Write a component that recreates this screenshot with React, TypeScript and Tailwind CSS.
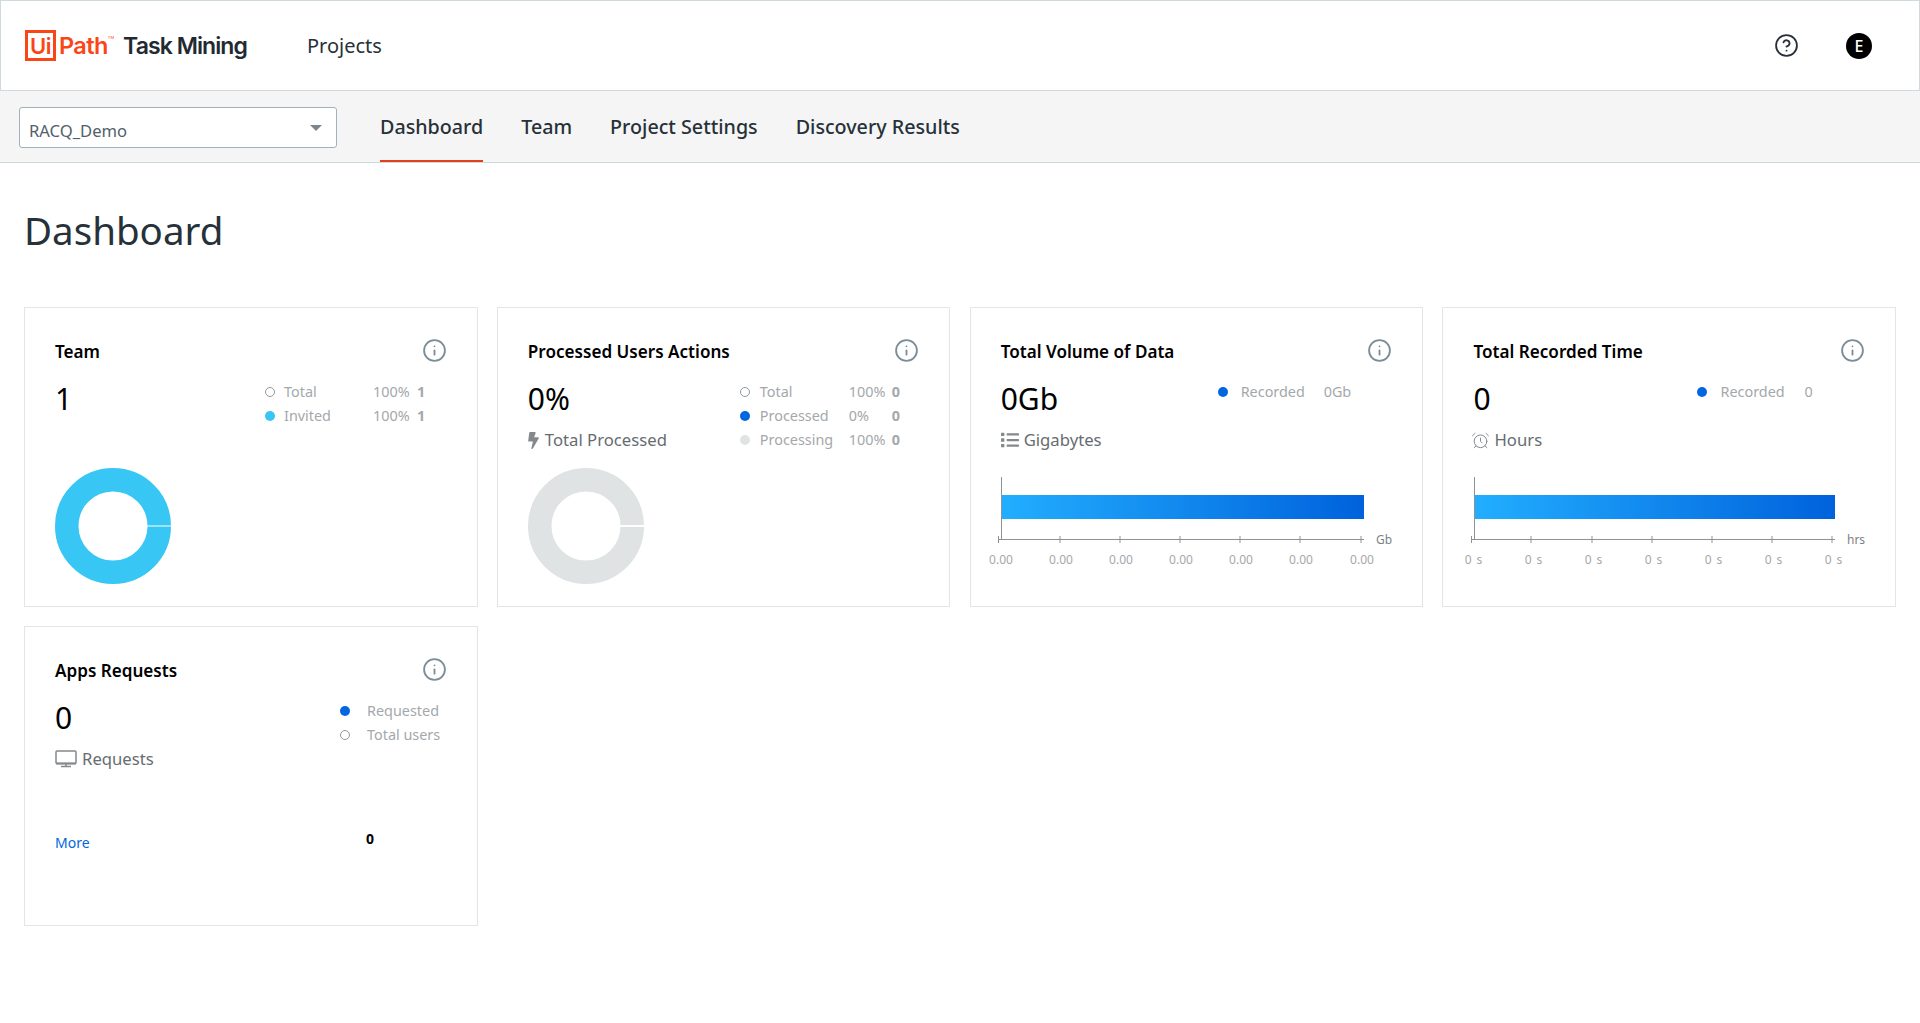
import { AlarmClock, CircleHelp, Info } from "lucide-react";
import { FaBolt, FaList } from "react-icons/fa";
import type { ReactNode } from "react";

type LegendRow = { dot: "hollow" | "blue" | "cyan" | "gray"; label: string; pct?: string; val?: string };

const dotClass = {
    hollow: "border border-[#8f9aa1] bg-white",
    blue: "bg-[#0067df]",
    cyan: "bg-[#38c6f4]",
    gray: "bg-[#dfe3e4]",
};

function Legend({ rows, className }: { rows: LegendRow[]; className: string }) {
    return (
        <div className={`grid items-center text-[14.4px] leading-6 text-[#a4a8ab] ${className}`}>
            {rows.map((r) => (
                <div key={r.label} className="contents">
                    <span className={`size-2.5 rounded-full ${dotClass[r.dot]}`} />
                    <span>{r.label}</span>
                    {r.pct !== undefined && <span>{r.pct}</span>}
                    {r.val !== undefined && <span className={r.pct !== undefined ? "font-bold" : ""}>{r.val}</span>}
                </div>
            ))}
        </div>
    );
}

function Card({
    title,
    value,
    sub,
    left,
    legend,
    children,
}: {
    title: string;
    value: string;
    sub?: ReactNode;
    left: string;
    legend: ReactNode;
    children?: ReactNode;
}) {
    return (
        <div className="h-[300px] border border-[#e3e5e6] bg-white pt-8 pl-[30px] pr-[30px]">
            <div className="flex items-center justify-between">
                <h3 className="text-[17.1px] leading-6 font-semibold text-black">{title}</h3>
                <Info size={25} strokeWidth={1.75} className="-my-px -mt-1 text-[#7b8d99]" />
            </div>
            <div className={`mt-[15px] grid ${left}`}>
                <div>
                    <div className="text-[30px] leading-10 text-black">{value}</div>
                    <div className="mt-[9px] flex h-6 items-center text-[16.7px] leading-6 text-[#676c70]">{sub}</div>
                </div>
                <div className="mt-px">{legend}</div>
            </div>
            {children}
        </div>
    );
}

function Donut({ color }: { color: string }) {
    return (
        <svg width="116" height="116" viewBox="0 0 116 116" className="mt-4 block">
            <circle cx="58" cy="58" r="46.25" fill="none" stroke={color} strokeWidth="23.5" />
            <rect x="92" y={color === "#dfe3e4" ? 57 : 57.5} width="24" height={color === "#dfe3e4" ? 2 : 1} fill="#fff" />
        </svg>
    );
}

function BarChart({ id, ticks, centers, label, unit, unitX, barEnd, className }: {
    id: string;
    ticks: number[];
    centers: number[];
    label: string;
    unit: string;
    unitX: number;
    barEnd: number;
    className?: string;
}) {
    const end = ticks[ticks.length - 1];
    return (
        <svg width="400" height="95" className={`mt-[25px] block overflow-visible ${className ?? ""}`}>
            <defs>
                <linearGradient id={id}>
                    <stop offset="0" stopColor="#22aeff" />
                    <stop offset="1" stopColor="#0062dc" />
                </linearGradient>
            </defs>
            <rect x="1" y="18" width={barEnd} height="24" fill={`url(#${id})`} />
            <path d={`M.5 0V62.5M${ticks[0]} 62.5H${end + 3}`} stroke="#8d9296" fill="none" />
            {ticks.map((t) => (
                <path key={t} d={`M${t} 59V66`} stroke="#8d9296" />
            ))}
            {centers.map((c) => (
                <text key={c} x={c} y="87" textAnchor="middle" fontSize="12" fill="#a4a8ab" letterSpacing={label === "0 s" ? 1 : 0}>
                    {label}
                </text>
            ))}
            <text x={unitX} y="67" fontSize="12" fill="#7c8286">{unit}</text>
        </svg>
    );
}

function MonitorIcon() {
    return (
        <svg width="22" height="18" viewBox="0 0 22 18" fill="none" stroke="#85898c" className="mr-[5px] shrink-0">
            <rect x="1" y="1" width="20" height="12.5" rx="1" strokeWidth="1.5" />
            <path d="M1 13.5H21" strokeWidth="2" />
            <path d="M11 14V16M6 16.5H16" strokeWidth="1.5" />
        </svg>
    );
}

export default function App() {
    return (
        <div className="min-h-[1023px] bg-white font-['Noto_Sans',sans-serif] text-[#273139]">
            <header className="flex h-[91px] items-center border border-[#cfd8dd] pl-6 pr-[47px]">
                <div className="flex w-[222px] items-center font-['Inter',sans-serif]">
                    <span className="flex h-[31px] w-[31px] items-center justify-center border-[3px] border-[#fa4616] text-[22px] leading-none font-semibold tracking-tight text-[#fa4616]">
                        Ui
                    </span>
                    <span className="ml-[3px] text-[23.5px] leading-none font-semibold tracking-tight text-[#fa4616]">Path</span>
                    <span className="mb-4 text-[4px] leading-none text-[#fa4616]">TM</span>
                    <span className="mt-0.5 ml-auto text-[23px] leading-none font-semibold tracking-[-0.04em] whitespace-nowrap text-[#1f2a33]">
                        Task Mining
                    </span>
                </div>
                <nav className="ml-[60px] text-[20px]">Projects</nav>
                <div className="ml-auto flex items-center gap-[47px]">
                    <CircleHelp size={25} strokeWidth={1.75} className="text-[#273139]" />
                    <span className="flex size-[26px] items-center justify-center rounded-full bg-black text-base font-medium text-white">
                        E
                    </span>
                </div>
            </header>

            <div className="flex h-[72px] border-b border-[#cfd8dd] bg-[#f5f5f5] pl-[19px]">
                <div className="mt-4 flex h-[41px] w-[318px] items-center justify-between rounded-[3px] border border-[#a4b1b8] bg-white pr-[14px] pl-[9px]">
                    <span className="mt-2 text-[16.6px] text-[#526069]">RACQ_Demo</span>
                    <span className="h-0 w-0 border-x-[6px] border-t-[6px] border-x-transparent border-t-[#7d868c]" />
                </div>
                <nav className="ml-[43px] flex gap-[38px] text-[19.7px] font-medium">
                    <a className="flex h-[71px] items-center border-b-2 border-[#e2401b] pt-0.5">Dashboard</a>
                    <a className="flex h-[71px] items-center">Team</a>
                    <a className="flex h-[71px] items-center">Project Settings</a>
                    <a className="flex h-[71px] items-center">Discovery Results</a>
                </nav>
            </div>

            <main className="px-6">
                <h1 className="mt-[42px] text-[38.5px] leading-[50px]">Dashboard</h1>
                <div className="mt-[52px] grid grid-cols-4 gap-x-[19.33px] gap-y-[19px]">
                    <Card
                        title="Team"
                        value="1"
                        left="grid-cols-[210px_1fr]"
                        legend={
                            <Legend
                                className="grid-cols-[19px_89px_44px_auto]"
                                rows={[
                                    { dot: "hollow", label: "Total", pct: "100%", val: "1" },
                                    { dot: "cyan", label: "Invited", pct: "100%", val: "1" },
                                ]}
                            />
                        }
                    >
                        <Donut color="#38c6f4" />
                    </Card>
                    <Card
                        title="Processed Users Actions"
                        value="0%"
                        sub={<><FaBolt size={17} className="mr-[3px] -ml-[3px] shrink-0 text-[#85898c]" />Total Processed</>}
                        left="grid-cols-[212px_1fr]"
                        legend={
                            <Legend
                                className="grid-cols-[20px_89px_43px_auto]"
                                rows={[
                                    { dot: "hollow", label: "Total", pct: "100%", val: "0" },
                                    { dot: "blue", label: "Processed", pct: "0%", val: "0" },
                                    { dot: "gray", label: "Processing", pct: "100%", val: "0" },
                                ]}
                            />
                        }
                    >
                        <Donut color="#dfe3e4" />
                    </Card>
                    <Card
                        title="Total Volume of Data"
                        value="0Gb"
                        sub={<><FaList size={18} className="mr-[5px] shrink-0 text-[#85898c]" />Gigabytes</>}
                        left="grid-cols-[217px_1fr]"
                        legend={
                            <Legend
                                className="grid-cols-[23px_83px_auto]"
                                rows={[{ dot: "blue", label: "Recorded", val: "0Gb" }]}
                            />
                        }
                    >
                        <BarChart
                            id="gb"
                            ticks={[-2.5, 59, 119, 179, 239, 299, 360]}
                            centers={[0, 60, 120, 180, 240, 300, 361]}
                            label="0.00"
                            unit="Gb"
                            unitX={375}
                            barEnd={362}
                        />
                    </Card>
                    <Card
                        title="Total Recorded Time"
                        value="0"
                        sub={<><AlarmClock size={19} strokeWidth={1.25} className="mr-1 -ml-0.5 shrink-0 text-[#85898c]" />Hours</>}
                        left="grid-cols-[224px_1fr]"
                        legend={
                            <Legend
                                className="grid-cols-[23px_84px_auto]"
                                rows={[{ dot: "blue", label: "Recorded", val: "0" }]}
                            />
                        }
                    >
                        <BarChart
                            id="hrs"
                            className="ml-px"
                            ticks={[-2.5, 57, 118, 178, 238, 298, 358]}
                            centers={[0, 60, 120, 180, 240, 300, 360]}
                            label="0 s"
                            unit="hrs"
                            unitX={373}
                            barEnd={360}
                        />
                    </Card>
                    <Card
                        title="Apps Requests"
                        value="0"
                        sub={<><MonitorIcon />Requests</>}
                        left="grid-cols-[285px_1fr]"
                        legend={
                            <Legend
                                className="grid-cols-[27px_auto]"
                                rows={[
                                    { dot: "blue", label: "Requested" },
                                    { dot: "hollow", label: "Total users" },
                                ]}
                            />
                        }
                    >
                        <div className="mt-[60px] grid grid-cols-[311px_auto]">
                            <a className="pt-0.5 text-sm leading-5 text-[#0067df]">More</a>
                            <span className="text-sm leading-4 font-bold text-black">0</span>
                        </div>
                    </Card>
                </div>
            </main>
        </div>
    );
}
